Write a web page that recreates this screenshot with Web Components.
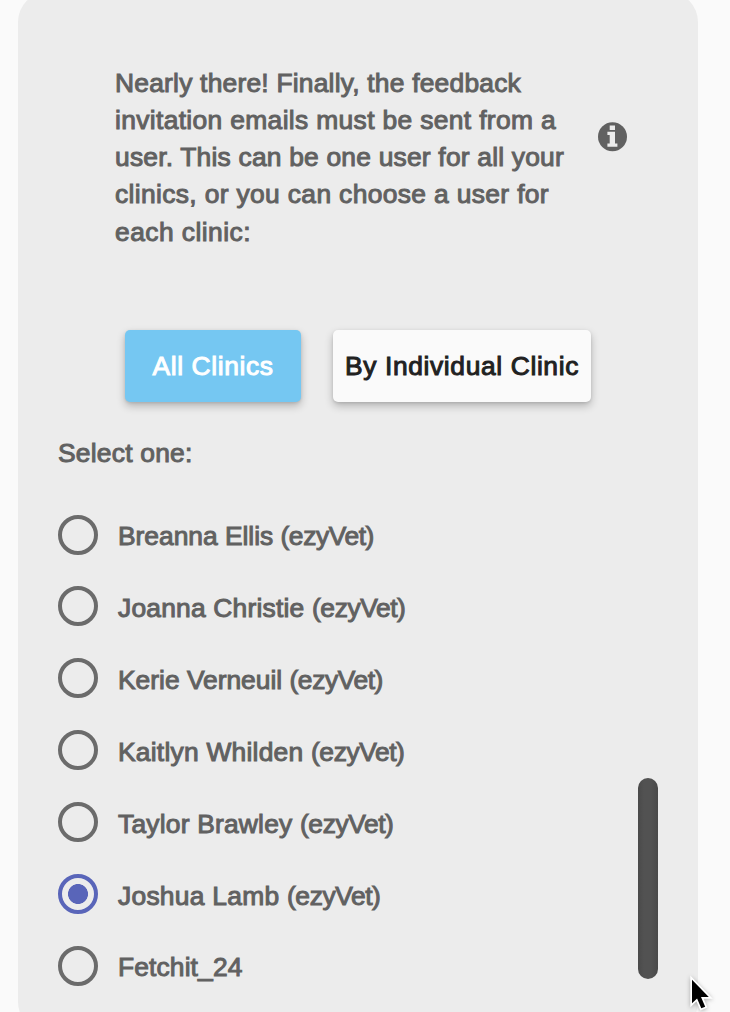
<!DOCTYPE html>
<html lang="en">
<head>
<meta charset="utf-8">
<title>Feedback invitations</title>
<style>
html, body { margin: 0; height: 1012px; overflow: hidden; background: #fafafa; }
body { font: 26px/37.14px "Liberation Sans", Arial, sans-serif; color: #616161; }
</style>
</head>
<body>
<sender-panel></sender-panel>
<script>
const define = (name, html, setup) => customElements.define(name, class extends HTMLElement {
  connectedCallback() {
    if (this.shadowRoot) return;
    this.attachShadow({ mode: "open" }).innerHTML = html;
    if (setup) setup(this, this.shadowRoot);
  }
});

// One line of medium-weight text, tracked to span the given advance width.
define("text-line", `<style>
  :host { display: block; white-space: pre; font-size: 26.4px; -webkit-text-stroke: 1px currentColor; }
  span { display: inline-block; }
</style><span><slot></slot></span>`, (host, root) => {
  const span = root.querySelector("span");
  const extra = Number(host.getAttribute("width")) - span.getBoundingClientRect().width;
  span.style.letterSpacing = extra / host.textContent.length + "px";
});

define("info-icon", `<style>
  :host { display: block; width: 30px; height: 30px; }
  svg { display: block; }
</style><svg width="30" height="30" viewBox="0 0 30 30">
  <circle cx="14.5" cy="14.8" r="14.5" fill="#616161"/>
  <path d="M11.7 3.4H17v4.5h-5.3zM9.4 9.8H17v11.6h2.4v3.3h-10v-3.3h2.3V13H9.4z" fill="#ececec"/>
</svg>`);

define("raised-button", `<style>
  :host { display: flex; align-items: center; justify-content: center; box-sizing: border-box; height: 72px;
    padding-top: 1px; border-radius: 5px; background: #fafafa; color: #212121;
    box-shadow: 0 4px 8px rgba(0,0,0,.24), 0 1px 3px rgba(0,0,0,.1); }
  :host([primary]) { background: #75c7f2; color: #fff; }
</style><slot></slot>`);

define("radio-option", `<style>
  :host { display: flex; gap: 20px; height: 71.9px; }
  i { box-sizing: border-box; flex: none; width: 40px; height: 40px; border: 4px solid #6b6b6b; border-radius: 50%; }
  :host([checked]) i { border-color: #5965b9; background: radial-gradient(circle, #5965b9 9.6px, transparent 10.3px); }
  div { display: flex; padding-top: 3.57px; }
</style><i></i><div><slot></slot></div>`);

define("scroll-thumb", `<style>
  :host { position: absolute; left: 620px; top: 786px; width: 20px; height: 201px; border-radius: 10px;
    background: linear-gradient(90deg, #4a4a4a, #525252 30%, #525252 65%, #494949); }
</style>`);

define("mouse-pointer", `<style>
  :host { position: absolute; left: 684px; top: 970px; width: 36px; height: 42px; }
  svg { display: block; filter: drop-shadow(0 1px 2px rgba(0,0,0,.3)); }
</style><svg width="36" height="42" viewBox="0 0 36 42">
  <path d="M8 9.7v23.6l5.1-4.7 4.2 9.7 3.9-1.6-4.2-9.7h7.8z" fill="#000" stroke="#fff" stroke-width="3.4" paint-order="stroke"/>
</svg>`);

define("sender-panel", `<style>
  :host { display: flow-root; box-sizing: border-box; position: relative; height: 1012px; padding: 0 32px 0 18px; }
  main { box-sizing: border-box; position: relative; height: 1040px; margin-top: -8px; padding: 73px 40px 0; background: #ececec; border-radius: 30px; }
  header { display: flex; height: 186px; padding-left: 57px; }
  .intro { width: 483px; }
  info-icon { margin-top: 57px; }
  nav { display: flex; gap: 32px; padding: 79px 0 0 67px; }
  .all { width: 176px; } .each { width: 258px; }
  .select { padding-top: 33px; }
  .list { padding-top: 42.4px; }
</style>
<main>
  <header>
    <div class="intro">
      <text-line width="406">Nearly there! Finally, the feedback</text-line>
      <text-line width="441">invitation emails must be sent from a</text-line>
      <text-line width="449">user. This can be one user for all your</text-line>
      <text-line width="434">clinics, or you can choose a user for</text-line>
      <text-line width="136">each clinic:</text-line>
    </div>
    <info-icon></info-icon>
  </header>
  <nav>
    <raised-button class="all" primary><text-line width="121">All Clinics</text-line></raised-button>
    <raised-button class="each"><text-line width="234">By Individual Clinic</text-line></raised-button>
  </nav>
  <div class="select"><text-line width="134.5">Select one:</text-line></div>
  <div class="list">
    <radio-option><text-line width="162.5">Breanna Ellis </text-line><text-line width="93.5">(ezyVet)</text-line></radio-option>
    <radio-option><text-line width="194">Joanna Christie </text-line><text-line width="93.5">(ezyVet)</text-line></radio-option>
    <radio-option><text-line width="171.5">Kerie Verneuil </text-line><text-line width="93.5">(ezyVet)</text-line></radio-option>
    <radio-option><text-line width="193">Kaitlyn Whilden </text-line><text-line width="93.5">(ezyVet)</text-line></radio-option>
    <radio-option><text-line width="182">Taylor Brawley </text-line><text-line width="93.5">(ezyVet)</text-line></radio-option>
    <radio-option checked><text-line width="169">Joshua Lamb </text-line><text-line width="93.5">(ezyVet)</text-line></radio-option>
    <radio-option><text-line width="124.5">Fetchit_24</text-line></radio-option>
  </div>
  <scroll-thumb></scroll-thumb>
</main>
<mouse-pointer></mouse-pointer>`);
</script>
</body>
</html>
